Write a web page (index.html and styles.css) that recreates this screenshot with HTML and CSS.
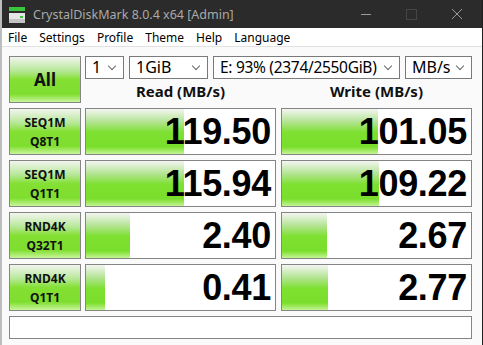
FILE: index.html
```html
<!DOCTYPE html>
<html lang="en">
<head>
    <meta charset="UTF-8">
    <title>CrystalDiskMark 8.0.4 x64 [Admin]</title>
    <link rel="stylesheet" href="styles.css">
</head>
<body>
    <div class="window">
        <div class="titlebar">
            <svg class="app-icon" width="16" height="16" viewBox="0 0 16 16">
                <rect x="0" y="0" width="16" height="4" fill="#3cc43c"/>
                <rect x="0" y="6" width="16" height="10" fill="#e6e6e6"/>
                <rect x="0" y="12" width="16" height="4" fill="#c4c4c4"/>
                <rect x="11" y="9" width="3" height="2" fill="#3cc43c"/>
            </svg>
            <span class="title">CrystalDiskMark 8.0.4 x64 [Admin]</span>
            <div class="controls">
                <span class="ctl min"></span>
                <span class="ctl max"></span>
                <svg class="ctl close" width="10" height="10" viewBox="0 0 10 10">
                    <path d="M0 0L10 10M10 0L0 10" stroke="#9a9a9a" stroke-width="1"/>
                </svg>
            </div>
        </div>

        <div class="menubar">
            <span>File</span>
            <span>Settings</span>
            <span>Profile</span>
            <span>Theme</span>
            <span>Help</span>
            <span>Language</span>
        </div>

        <div class="main">
            <button class="label-btn all">All</button>
            <div class="top">
                <div class="combos">
                    <div class="combo c-count">1</div>
                    <div class="combo c-size">1GiB</div>
                    <div class="combo c-drive">E: 93% (2374/2550GiB)</div>
                    <div class="combo c-unit">MB/s</div>
                </div>
                <div class="heads">
                    <div class="head">Read (MB/s)</div>
                    <div class="head w">Write (MB/s)</div>
                </div>
            </div>

            <button class="label-btn">SEQ1M<br>Q8T1</button>
            <div class="result"><div class="bar" style="width: 98px"></div><span>119.50</span></div>
            <div class="result w"><div class="bar" style="width: 96px"></div><span>101.05</span></div>

            <button class="label-btn">SEQ1M<br>Q1T1</button>
            <div class="result"><div class="bar" style="width: 98px"></div><span>115.94</span></div>
            <div class="result w"><div class="bar" style="width: 97px"></div><span>109.22</span></div>

            <button class="label-btn">RND4K<br>Q32T1</button>
            <div class="result"><div class="bar" style="width: 44px"></div><span>2.40</span></div>
            <div class="result w"><div class="bar" style="width: 45px"></div><span>2.67</span></div>

            <button class="label-btn">RND4K<br>Q1T1</button>
            <div class="result"><div class="bar" style="width: 19px"></div><span>0.41</span></div>
            <div class="result w"><div class="bar" style="width: 46px"></div><span>2.77</span></div>

            <div class="comment"></div>
        </div>
    </div>
</body>
</html>
```

FILE: styles.css
```css
body {
    margin: 0;
    background-color: #1e1e1e;
    font-family: "Noto Sans", "Open Sans", sans-serif;
}
.window {
    width: 482px;
    height: 345px;
    background-color: #fafafa;
    border-left: 2px solid #bdbdbd;
    box-sizing: border-box;
    overflow: hidden;
}
.titlebar {
    height: 28px;
    margin-left: -2px;
    width: 483px;
    background-color: #2b2b2b;
    display: flex;
    align-items: center;
}
.app-icon {
    margin-left: 9px;
    margin-top: 1px;
}
.title {
    margin-left: 8px;
    color: #a9a9a9;
    font-size: 12.5px;
}
.controls {
    margin-left: auto;
    display: flex;
    align-items: center;
    gap: 35px;
    margin-right: 21px;
}
.ctl.min {
    width: 10px;
    height: 1px;
    background-color: #9a9a9a;
}
.ctl.max {
    width: 9px;
    height: 9px;
    border: 1px solid #454545;
}
.menubar {
    height: 18px;
    background-color: #ffffff;
    border-bottom: 1px solid #e2e2e2;
    display: flex;
    align-items: center;
    gap: 12px;
    padding-left: 6px;
    font-size: 12px;
    color: #000;
}
.main {
    display: grid;
    grid-template-columns: 72px 191px 192px;
    grid-template-rows: 47px 47px 47px 47px 47px 23px;
    column-gap: 4px;
    row-gap: 5px;
    padding: 9px 0 0 7px;
}
.label-btn {
    margin: 0;
    padding: 0;
    border: 1px solid #858585;
    background: linear-gradient(to bottom, #f2f5ee 0%, #b8e89a 30%, #84e034 50%, #7ede2e 82%, #c8f59c 100%);
    font-family: "Noto Sans", sans-serif;
    font-weight: bold;
    font-size: 12px;
    line-height: 19px;
    color: #111;
}
.label-btn.all {
    font-size: 17px;
}
.top {
    grid-column: 2 / 4;
    display: flex;
    flex-direction: column;
}
.combos {
    display: flex;
    gap: 5px;
    height: 23px;
}
.combo {
    position: relative;
    box-sizing: border-box;
    height: 23px;
    border: 1px solid #7a7a7a;
    background-color: #ffffff;
    font-size: 16px;
    line-height: 21px;
    padding-left: 6px;
    color: #000;
    white-space: nowrap;
    overflow: hidden;
}
.combo::after {
    content: "";
    position: absolute;
    right: 8px;
    top: 6px;
    width: 5px;
    height: 5px;
    border-right: 1px solid #6a6a6a;
    border-bottom: 1px solid #6a6a6a;
    transform: rotate(45deg);
}
.c-count { width: 39px; }
.c-size { width: 79px; }
.c-drive { width: 187px; font-size: 15.5px; letter-spacing: -0.3px; }
.c-unit { width: 67px; }
.heads {
    display: grid;
    grid-template-columns: 191px 191px;
    column-gap: 5px;
    flex: 1;
}
.head {
    text-align: center;
    font-weight: bold;
    font-size: 15px;
    line-height: 24px;
    color: #111;
}
.result {
    position: relative;
    box-sizing: border-box;
    border: 1px solid #858585;
    background-color: #ffffff;
    display: flex;
    justify-content: flex-end;
    align-items: center;
}
.result.w {
    margin-left: 1px;
}
.bar {
    position: absolute;
    left: 0;
    top: 0;
    bottom: 0;
    background: linear-gradient(to bottom, #f4f6f2 0%, #b4e494 28%, #7ee030 52%, #7ade2c 84%, #c4f594 100%);
}
.result span {
    position: relative;
    font-family: "Liberation Sans", Arial, sans-serif;
    font-weight: bold;
    font-size: 36px;
    padding-right: 4px;
    color: #000;
    letter-spacing: -0.3px;
}
.comment {
    grid-column: 1 / 4;
    border: 1px solid #858585;
    background-color: #ffffff;
}
```
